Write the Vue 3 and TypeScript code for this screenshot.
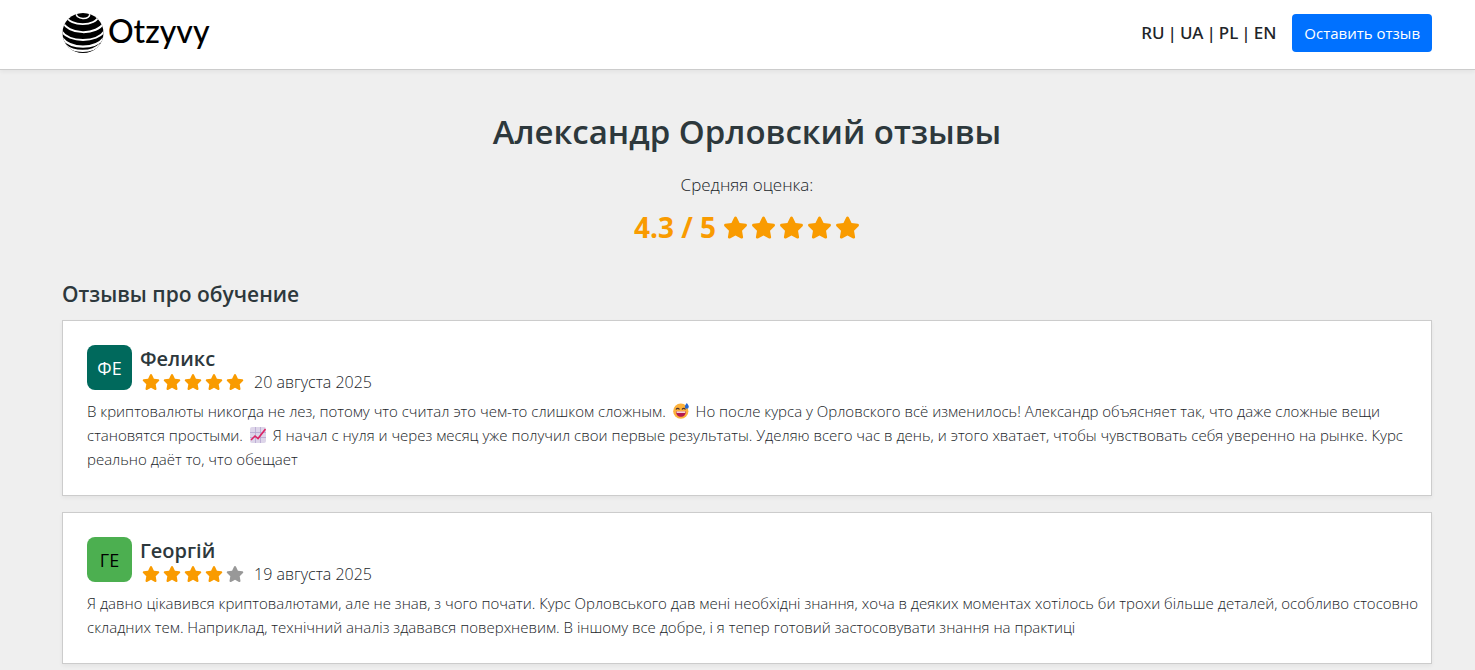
<script setup lang="ts">
interface Part {
  kind: 'text' | 'sweat' | 'chart'
  value?: string
}

interface Review {
  id: number
  name: string
  initials: string
  tone: 'teal' | 'green'
  rating: number
  date: string
  iso: string
  parts: Part[]
}

const languages: string[] = ['RU', 'UA', 'PL', 'EN']
const starPath =
  'M316.9 18C311.6 7 300.4 0 288.1 0s-23.4 7-28.8 18L195 150.3 51.4 171.5c-12 1.8-22 10.2-25.7 21.7s-.7 24.2 7.9 32.7L137.8 329 113.2 474.7c-2 12 3 24.2 12.9 31.3s23 8 33.8 2.3l128.3-68.5 128.3 68.5c10.8 5.7 23.9 4.9 33.8-2.3s14.9-19.3 12.9-31.3L438.5 329 542.7 225.9c8.6-8.5 11.7-21.2 7.9-32.7s-13.7-19.9-25.7-21.7L381.2 150.3 316.9 18z'

const reviews: Review[] = [
  {
    id: 1,
    name: 'Феликс',
    initials: 'ФЕ',
    tone: 'teal',
    rating: 5,
    date: '20 августа 2025',
    iso: '2025-08-20',
    parts: [
      { kind: 'text', value: 'В криптовалюты никогда не лез, потому что считал это чем-то слишком сложным. ' },
      { kind: 'sweat' },
      { kind: 'text', value: ' Но после курса у Орловского всё изменилось! Александр объясняет так, что даже сложные вещи становятся простыми. ' },
      { kind: 'chart' },
      { kind: 'text', value: ' Я начал с нуля и через месяц уже получил свои первые результаты. Уделяю всего час в день, и этого хватает, чтобы чувствовать себя уверенно на рынке. Курс реально даёт то, что обещает' },
    ],
  },
  {
    id: 2,
    name: 'Георгій',
    initials: 'ГЕ',
    tone: 'green',
    rating: 4,
    date: '19 августа 2025',
    iso: '2025-08-19',
    parts: [
      { kind: 'text', value: 'Я давно цікавився криптовалютами, але не знав, з чого почати. Курс Орловського дав мені необхідні знання, хоча в деяких моментах хотілось би трохи більше деталей, особливо стосовно складних тем. Наприклад, технічний аналіз здавався поверхневим. В іншому все добре, і я тепер готовий застосовувати знання на практиці' },
    ],
  },
]
</script>

<template>
  <div class="page">
    <header class="header">
      <div class="container bar">
        <a class="logo" href="#">
          <svg class="globe" viewBox="0 0 42 42" aria-hidden="true">
            <defs><clipPath id="ball"><ellipse cx="21" cy="21" rx="20.5" ry="20" /></clipPath></defs>
            <g clip-path="url(#ball)">
              <rect width="42" height="42" fill="#000" />
              <g fill="none" stroke="#fff">
                <path d="M14.500 0C12 8.500 29.500 8.500 27.500 1.500" stroke-width="1.500" />
                <path d="M4 4C8 15 34 15 37 3.500" stroke-width="1.800" />
                <path d="M0 8.500C5 23.500 36 24 42 10" stroke-width="2" />
                <path d="M-1 18.500C7 31 35 31 43 18.500" stroke-width="2" />
                <path d="M0 26C9 37.500 33 37.500 42 26" stroke-width="2.200" />
                <path d="M3 33C12 41 30 41 38 32.500" stroke-width="2.200" />
              </g>
            </g>
          </svg>
          <span>Otzyvy</span>
        </a>
        <div class="actions">
          <nav class="langs">
            <template v-for="(lang, i) in languages" :key="lang">
              <span v-if="i > 0">|</span><a href="#">{{ lang }}</a>
            </template>
          </nav>
          <button class="cta" type="button">Оставить отзыв</button>
        </div>
      </div>
    </header>

    <main class="container">
      <section class="summary">
        <h1>Александр Орловский отзывы</h1>
        <p class="caption">Средняя оценка:</p>
        <div class="score">
          <span>4.3 / 5</span>
          <span class="stars big">
            <svg v-for="n in 5" :key="n" viewBox="0 0 576 512"><path :d="starPath" /></svg>
          </span>
        </div>
      </section>

      <h2>Отзывы про обучение</h2>
      <article v-for="review in reviews" :key="review.id" class="card">
        <div class="author">
          <div class="avatar" :class="review.tone">{{ review.initials }}</div>
          <div>
            <h3>{{ review.name }}</h3>
            <div class="meta">
              <span class="stars">
                <svg v-for="n in 5" :key="n" :class="{ off: n > review.rating }" viewBox="0 0 576 512"><path :d="starPath" /></svg>
              </span>
              <time :datetime="review.iso">{{ review.date }}</time>
            </div>
          </div>
        </div>
        <p class="body">
          <template v-for="(part, i) in review.parts" :key="i">
            <template v-if="part.kind === 'text'">{{ part.value }}</template>
            <svg v-else-if="part.kind === 'sweat'" class="emoji" viewBox="0 0 16 16" role="img" aria-label="😅">
              <circle cx="7.800" cy="8.200" r="7.600" fill="#fcb13c" />
              <path d="M3 6.500C4 5 5.500 5 6.500 6.500M9 6.500C10 5 11.500 5 12.500 6.500" fill="none" stroke="#4b3031" stroke-width="1.200" />
              <path d="M3 8.500h9.800c0 3.300-2.100 5.300-4.900 5.300S3 11.800 3 8.500z" fill="#b5194e" />
              <path d="M3.600 8.500h8.600v1.300H3.600z" fill="#fff" />
              <path d="M13.800 0c-1 1.500-2 2.600-2 3.800a2 2 0 0 0 4 0c0-1.200-1-2.300-2-3.800z" fill="#2868d0" />
            </svg>
            <svg v-else class="emoji" viewBox="0 0 16 16" role="img" aria-label="📈">
              <rect width="16" height="16" rx="2" fill="#ddd5e9" />
              <path d="M5.500 0v16M10.500 0v16M0 5.500h16M0 10.500h16" stroke="#b5a5cf" stroke-width=".8" />
              <path d="m1 13 4-4 3 2.500L15.500 2" fill="none" stroke="#dc2364" stroke-width="1.600" />
            </svg>
          </template>
        </p>
      </article>
    </main>
  </div>
</template>

<style>
body {
  margin: 0;
  background: #efefef;
}
</style>

<style scoped>
.page {
  min-height: 100vh;
  overflow: hidden;
  box-sizing: border-box;
  background: #efefef;
  color: #212529;
  font-family: "Open Sans", "Noto Sans", sans-serif;
  font-size: 15px;
  font-weight: 300;
  line-height: 24px;
}
.container {
  padding: 0 43px 0 62px;
}
.header {
  background: #fff;
  border-bottom: 1px solid #ccc;
  box-shadow: 0 2px 4px rgba(0, 0, 0, 0.05);
}
.bar {
  display: flex;
  align-items: center;
  justify-content: space-between;
  min-height: 69px;
}
.logo {
  display: flex;
  align-items: center;
  gap: 4px;
  margin-bottom: 4px;
  color: #000;
  font-family: Lato, sans-serif;
  font-size: 32px;
  font-weight: 500;
  line-height: 38px;
  text-decoration: none;
}
.logo span {
  padding-bottom: 4px;
}
.globe {
  width: 42px;
  height: 42px;
}
.actions {
  display: flex;
  align-items: center;
  gap: 16px;
  margin-top: -3px;
}
.langs {
  display: flex;
  gap: 3px;
  font-family: "Noto Sans", sans-serif;
  font-size: 17px;
  font-weight: 500;
}
.langs a {
  color: inherit;
  text-decoration: none;
}
.cta {
  height: 38px;
  padding: 0 12px;
  border: 0;
  border-radius: 4px;
  background: #0071ff;
  color: #fff;
  font: 400 15px/24px "Open Sans", "Noto Sans", sans-serif;
}
.summary {
  display: flex;
  flex-direction: column;
  align-items: center;
  padding-top: 40px;
  text-align: center;
}
h1,
h2,
h3,
p {
  margin: 0;
}
h1,
h2,
h3 {
  color: #2d383c;
  font-weight: 600;
}
h1 {
  font-size: 33px;
  line-height: 44px;
}
.caption {
  margin-top: 19px;
  font-size: 17px;
}
.score {
  display: flex;
  align-items: center;
  gap: 7px;
  margin-top: 12px;
  color: #f99b00;
  font-size: 28px;
  font-weight: 700;
  line-height: 36px;
}
.stars {
  display: flex;
  gap: 3px;
}
.stars svg {
  width: 18px;
  height: 16px;
  fill: #f99b00;
}
.stars svg.off {
  fill: #989898;
}
.stars.big svg {
  width: 25px;
  height: 23px;
}
h2 {
  margin: 35px 0 12px;
  font-size: 21px;
  line-height: 28px;
}
.card {
  margin-bottom: 16px;
  padding: 24px 8px 24px 24px;
  border: 1px solid #ccc;
  background: #fff;
  box-shadow: 0 2px 4px rgba(0, 0, 0, 0.05);
}
.author {
  display: flex;
  gap: 8px;
  margin-bottom: 7px;
}
.avatar {
  display: flex;
  align-items: center;
  justify-content: center;
  width: 45px;
  height: 45px;
  border-radius: 8px;
  font-size: 18px;
  font-weight: 400;
}
.avatar.teal {
  background: #00695c;
  color: #fff;
}
.avatar.green {
  background: #4caf50;
  color: #000;
}
h3 {
  font-size: 20px;
  line-height: 27px;
}
.meta {
  display: flex;
  align-items: center;
  gap: 10px;
  padding-left: 2px;
  font-size: 16px;
  line-height: 20px;
}
.emoji {
  width: 16px;
  height: 16px;
  margin: 0 3px;
  vertical-align: -2px;
}
</style>
